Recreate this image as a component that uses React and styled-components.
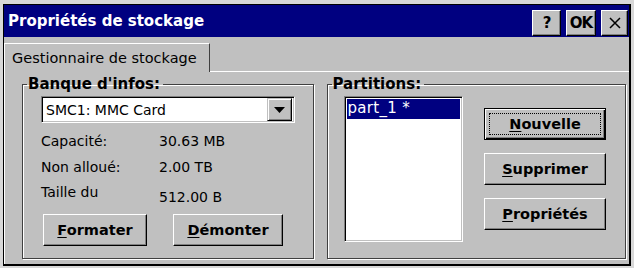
import React from "react";
import styled, { createGlobalStyle } from "styled-components";

const Global = createGlobalStyle`
  html, body { margin: 0; padding: 0; background: #d8d8d8; }
  body { font-family: "DejaVu Sans", "Noto Sans", sans-serif; font-size: 14px; color: #000; }
  * { box-sizing: border-box; }
`;

const Window = styled.div`
  width: 628px;
  height: 262px;
  margin: 4px 0 0 3px;
  border: 1px solid #000;
  border-right-width: 2px;
  border-bottom-width: 2px;
  background: #c0c0c0;
  display: flex;
  flex-direction: column;
`;

const TitleBar = styled.div`
  height: 32px;
  background: #000080;
  display: flex;
  align-items: flex-end;
  padding: 0 1px 1px 4px;
`;

const Title = styled.div`
  flex: 1;
  align-self: center;
  color: #fff;
  font-weight: bold;
  font-size: 15px;
`;

const CaptionButtons = styled.div`
  display: flex;
  gap: 5px;
`;

const CaptionButton = styled.div`
  width: ${p => p.$w || 29}px;
  height: 26px;
  background: #c0c0c0;
  border-top: 1px solid #fff;
  border-left: 1px solid #fff;
  border-right: 1px solid #000;
  border-bottom: 1px solid #000;
  box-shadow: inset -1px -1px 0 #808080;
  display: flex;
  align-items: center;
  justify-content: center;
  font-weight: bold;
  font-size: 15px;
  letter-spacing: -1px;
`;

const Body = styled.div`
  flex: 1;
  display: flex;
  flex-direction: column;
  padding: 6px 0 0 0;
`;

const TabStrip = styled.div`
  display: flex;
  align-items: flex-end;
  height: 29px;
`;

const Tab = styled.div`
  height: 29px;
  padding: 0 12px 0 7px;
  border-top: 1px solid #fff;
  border-left: 1px solid #fff;
  border-right: 1px solid #404040;
  display: flex;
  align-items: center;
  font-size: 14.5px;
`;

const TabRest = styled.div`
  flex: 1;
  border-bottom: 1px solid #fff;
`;

const Page = styled.div`
  flex: 1;
  display: flex;
  gap: 13px;
  padding: 0 3px 5px 17px;
  border-left: 1px solid #fff;
`;

const Group = styled.fieldset`
  margin: 4px 0 0 0;
  padding: 0;
  width: ${p => p.$w}px;
  border: 1px solid #404040;
  box-shadow: 1px 1px 0 #fff, inset 1px 1px 0 #fff;
  display: flex;
  flex-direction: column;
  min-width: 0;
`;

const Legend = styled.legend`
  margin-left: 4px;
  padding: 0 3px 0 1px;
  font-weight: bold;
  font-size: 15px;
  line-height: 17px;
`;

const Sunken = styled.div`
  background: #fff;
  border-top: 1px solid #808080;
  border-left: 1px solid #808080;
  border-right: 1px solid #fff;
  border-bottom: 1px solid #fff;
  box-shadow: inset 1px 1px 0 #000, inset -1px -1px 0 #c0c0c0;
`;

const Combo = styled(Sunken)`
  margin: 3px 18px 0 18px;
  height: 27px;
  display: flex;
  align-items: center;
  padding: 2px 2px 2px 4px;
`;

const ComboText = styled.div`
  flex: 1;
`;

const ArrowButton = styled.div`
  width: 25px;
  height: 23px;
  background: #c0c0c0;
  border-top: 1px solid #c0c0c0;
  border-left: 1px solid #c0c0c0;
  border-right: 1px solid #000;
  border-bottom: 1px solid #000;
  box-shadow: inset 1px 1px 0 #fff, inset -1px -1px 0 #808080;
  display: flex;
  align-items: center;
  justify-content: center;
`;

const InfoGrid = styled.div`
  display: grid;
  grid-template-columns: 118px 1fr;
  grid-auto-rows: 26px;
  margin: 5px 18px 0 18px;
  align-items: center;
`;

const Cell = styled.div`
  transform: translateY(${p => p.$dy || 0}px);
`;

const ButtonRow = styled.div`
  display: flex;
  gap: 26px;
  margin: 8px 0 0 20px;
`;

const Button = styled.div`
  width: ${p => p.$w}px;
  height: 32px;
  background: #c0c0c0;
  border-top: 1px solid #fff;
  border-left: 1px solid #fff;
  border-right: 1px solid #000;
  border-bottom: 1px solid #000;
  box-shadow: inset -1px -1px 0 #808080;
  display: flex;
  align-items: center;
  justify-content: center;
  font-weight: bold;
  font-size: 14.5px;
  u { text-underline-offset: 2px; }
`;

const DefaultButton = styled(Button)`
  border: 1px solid #000;
  box-shadow: inset 1px 1px 0 #fff, inset -1px -1px 0 #000, inset -2px -2px 0 #808080;
  position: relative;
  &::after {
    content: "";
    position: absolute;
    inset: 4px;
    border: 1px dotted #000;
  }
`;

const PartRow = styled.div`
  display: flex;
  flex: 1;
  padding: 0 19px 13px 16px;
  margin-top: 3px;
`;

const ListBox = styled(Sunken)`
  width: 119px;
  height: 146px;
  padding: 2px;
`;

const ListItem = styled.div`
  height: 20px;
  background: ${p => (p.$sel ? "#000080" : "transparent")};
  color: ${p => (p.$sel ? "#fff" : "#000")};
  padding-left: 1px;
  font-size: 15px;
  line-height: 19px;
  letter-spacing: 0.3px;
`;

const ButtonColumn = styled.div`
  flex: 1;
  display: flex;
  flex-direction: column;
  align-items: flex-end;
  gap: 13px;
  padding-top: 12px;
`;

export default function App() {
  return (
    <>
      <Global />
      <Window>
        <TitleBar>
          <Title>Propriétés de stockage</Title>
          <CaptionButtons>
            <CaptionButton>?</CaptionButton>
            <CaptionButton $w={30}>OK</CaptionButton>
            <CaptionButton $w={27}>
              <svg width="12" height="12" viewBox="0 0 12 12">
                <path d="M1 1 L11 11 M11 1 L1 11" stroke="#000" strokeWidth="1.5" />
              </svg>
            </CaptionButton>
          </CaptionButtons>
        </TitleBar>
        <Body>
          <TabStrip>
            <Tab>Gestionnaire de stockage</Tab>
            <TabRest />
          </TabStrip>
          <Page>
            <Group $w={292}>
              <Legend>Banque d'infos:</Legend>
              <Combo>
                <ComboText>SMC1: MMC Card</ComboText>
                <ArrowButton>
                  <svg width="11" height="6" viewBox="0 0 11 6">
                    <path d="M0 0 H11 L5.5 6 Z" fill="#000" />
                  </svg>
                </ArrowButton>
              </Combo>
              <InfoGrid>
                <Cell>Capacité:</Cell>
                <Cell>30.63 MB</Cell>
                <Cell>Non alloué:</Cell>
                <Cell>2.00 TB</Cell>
                <Cell $dy={-1}>Taille du</Cell>
                <Cell $dy={4}>512.00 B</Cell>
              </InfoGrid>
              <ButtonRow>
                <Button $w={104}><span><u>F</u>ormater</span></Button>
                <Button $w={110}><span><u>D</u>émonter</span></Button>
              </ButtonRow>
            </Group>
            <Group $w={300}>
              <Legend>Partitions:</Legend>
              <PartRow>
                <ListBox>
                  <ListItem $sel>part_1 *</ListItem>
                </ListBox>
                <ButtonColumn>
                  <DefaultButton $w={122}><span><u>N</u>ouvelle</span></DefaultButton>
                  <Button $w={122}><span><u>S</u>upprimer</span></Button>
                  <Button $w={122}><span><u>P</u>ropriétés</span></Button>
                </ButtonColumn>
              </PartRow>
            </Group>
          </Page>
        </Body>
      </Window>
    </>
  );
}
